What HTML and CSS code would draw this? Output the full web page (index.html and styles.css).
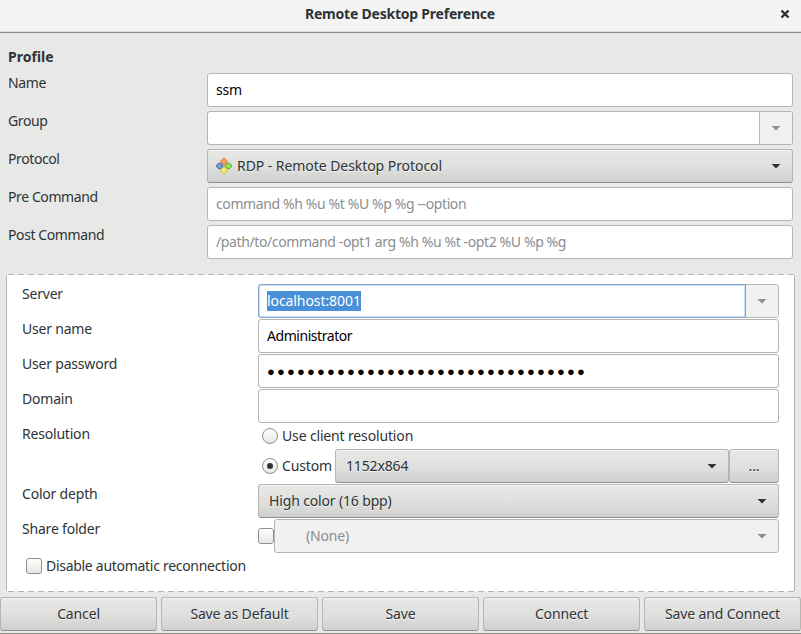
FILE: index.html
```
<!DOCTYPE html>
<html lang="en">
<head>
<meta charset="utf-8">
<title>Remote Desktop Preference</title>
<link rel="stylesheet" href="styles.css">
</head>
<body>
<header class="titlebar">
  <h1>Remote Desktop Preference</h1>
  <svg class="close" width="10" height="10" viewBox="0 0 10 10"><path d="M1.500 1.500l7 7M8.500 1.500l-7 7"/></svg>
</header>
<section class="profile">
  <h2>Profile</h2>
  <div class="row"><label>Name</label><div class="entry"><span>ssm</span></div></div>
  <div class="row"><label>Group</label><div class="entry split"><span></span><div class="drop"><i class="arrow"></i></div></div></div>
  <div class="row"><label>Protocol</label><div class="combo proto">
    <svg width="16" height="16" viewBox="0 0 16 16">
      <path d="M7.200 .5h1.600l2 2v2L8.800 6.800H7.200l-2-2.300v-2z" fill="#f9a066" stroke="#dd6c22"/>
      <path d="M2.500 5.300h2L6.800 7.200v1.600l-2.300 1.900h-2L.5 8.800V7.200z" fill="#7c9fd3" stroke="#34619f"/>
      <path d="M11.500 5.300h2l2 1.900v1.600l-2 1.900h-2L9.200 8.800V7.200z" fill="#8fe35a" stroke="#4da51d"/>
      <path d="M7.200 9.200h1.600l2 2.300v2l-2 2H7.200l-2-2v-2z" fill="#f9ec6c" stroke="#d9bc28"/>
    </svg>
    <span>RDP - Remote Desktop Protocol</span><i class="arrow"></i></div></div>
  <div class="row"><label>Pre Command</label><div class="entry hint"><span>command %h %u %t %U %p %g --option</span></div></div>
  <div class="row"><label>Post Command</label><div class="entry hint"><span>/path/to/command -opt1 arg %h %u %t -opt2 %U %p %g</span></div></div>
</section>
<div class="edge"></div>
<section class="settings">
  <div class="row"><label>Server</label><div class="entry split focus"><span><mark>localhost:8001</mark></span><div class="drop"><i class="arrow"></i></div></div></div>
  <div class="row"><label>User name</label><div class="entry user"><span>Administrator</span></div></div>
  <div class="row"><label>User password</label><div class="entry"><span class="dots">●●●●●●●●●●●●●●●●●●●●●●●●●●●●●●●●</span></div></div>
  <div class="row"><label>Domain</label><div class="entry"></div></div>
  <div class="row short"><label>Resolution</label><div class="line inset"><i class="radio"></i><span>Use client resolution</span></div></div>
  <div class="row"><label></label><div class="line inset"><i class="radio on"></i><span class="custom">Custom</span><div class="combo res"><span>1152x864</span><i class="arrow"></i></div><div class="button more">...</div></div></div>
  <div class="row"><label>Color depth</label><div class="combo depth"><span>High color (16 bpp)</span><i class="arrow"></i></div></div>
  <div class="row"><label>Share folder</label><div class="line"><i class="check"></i><div class="combo off"><span>(None)</span><i class="arrow"></i></div></div></div>
  <div class="line auto"><i class="check"></i><span>Disable automatic reconnection</span></div>
</section>
<div class="edge"></div>
<footer class="actions">
  <div class="button">Cancel</div><div class="button">Save as Default</div><div class="button">Save</div><div class="button">Connect</div><div class="button">Save and Connect</div>
</footer>
<div class="base"></div>
</body>
</html>
```
FILE: styles.css
```
* { box-sizing: border-box; }
body { margin: 0; width: 801px; height: 634px; overflow: hidden; background: #e8e8e6; color: #2e3436; font: 14px/20px "Noto Sans", "Open Sans", sans-serif; letter-spacing: -0.15px; white-space: nowrap; display: flex; flex-direction: column; }
h1, h2 { margin: 0; font-size: 14px; line-height: 20px; font-weight: 700; }
h1 { letter-spacing: -0.22px; }
h2 { letter-spacing: 0; padding-left: 1px; }
.titlebar { height: 33px; background: #f4f4f4; border-bottom: 1px solid #8b8b86; box-shadow: inset 0 -1px #dfdfdc; padding: 4px 11px 0 10px; display: grid; grid-template-columns: 10px 1fr 10px; text-align: center; }
.titlebar h1 { grid-column: 2; }
.close { margin-top: 5px; fill: none; stroke: #2e3436; stroke-width: 2.4; }
.profile { height: 241px; padding: 14px 8px 0 7px; display: flex; flex-direction: column; }
.profile h2 { height: 26px; }
.profile .row { height: 38px; grid-template-columns: 200px 1fr; }
.profile label { padding-left: 1px; letter-spacing: -0.4px; }
.row { display: grid; align-items: start; flex: none; }
.entry, .combo, .button { height: 34px; border: 1px solid #b5b5b2; border-radius: 3px; display: flex; align-items: center; }
.entry { background: #fff; color: #000; padding: 0 8px; }
.user { letter-spacing: -0.45px; }
.hint { color: #8b8e8f; letter-spacing: -0.39px; font-variant-ligatures: none; }
.split { justify-content: space-between; padding-right: 0; }
.drop { width: 33px; height: 32px; background: #f1f1f1; border-left: 1px solid #b5b5b2; border-radius: 0 2px 2px 0; display: flex; align-items: center; justify-content: center; }
.arrow { flex: none; width: 10px; height: 5px; background: #2e3436; clip-path: polygon(0 0, 100% 0, 50% 100%); }
.drop .arrow, .off .arrow { background: #8b8e8f; }
.combo, .button { background: linear-gradient(#e8e8e6, #dededc 60%, #cfcfcd); border-bottom-color: #8f8f8c; box-shadow: inset 0 1px #f6f6f5; text-shadow: 0 1px #f3f3f2; }
.combo { padding: 0 11px 0 10px; justify-content: space-between; }
.proto { justify-content: flex-start; padding-left: 8px; gap: 5px; letter-spacing: -0.06px; }
.proto .arrow { margin-left: auto; }
.edge { flex: none; height: 1px; margin: 0 4px; background: repeating-linear-gradient(90deg, #f0f0ee 0 4px, #b4b4b1 4px 10px); }
.settings { flex: none; height: 316px; margin: 0 6px; padding: 9px 15px 0; border: solid #b5b5b2; border-width: 0 1px; background: #fff; display: flex; flex-direction: column; }
.settings .row { height: 35px; grid-template-columns: 236px 1fr; }
.settings .row.short { height: 25px; }
.settings label { letter-spacing: -0.2px; }
.line { display: flex; align-items: center; }
.inset { padding-left: 4px; }
.short .line { height: 24px; }
.focus { position: relative; }
.focus::before { content: ""; position: absolute; inset: -1px 32px -1px -1px; border: 1px solid #86a5cc; box-shadow: inset 0 0 0 1px #c9def5; border-radius: 3px 0 0 3px; }
mark { background: #4a90d9; color: #fff; position: relative; display: inline-block; letter-spacing: -0.08px; }
.radio, .check { flex: none; width: 16px; height: 16px; border: 1px solid #8f8f8c; background: linear-gradient(#fff, #e6e6e4); margin-right: 4px; }
.radio { border-radius: 50%; display: grid; place-items: center; }
.on::after { content: ""; width: 6px; height: 6px; border-radius: 50%; background: #2e3436; }
.check { border-radius: 3px; }
.custom { width: 53px; }
.res { flex: 1; }
.more { width: 50px; }
.button { justify-content: center; }
.row .check { margin-right: 0; }
.off { flex: 1; background: #f1f1f0; color: #8b8e8f; border-color: #b5b5b2; box-shadow: none; text-shadow: none; padding-left: 31px; }
.auto { padding-left: 4px; margin-top: 2px; letter-spacing: -0.29px; }
.dots { font-size: 13px; letter-spacing: 2.15px; }
.actions { display: flex; gap: 4px; padding-top: 5px; flex: none; }
.actions .button { width: 157px; }
.base { flex: none; margin-top: 2px; height: 1px; background: #8b8b88; }
```
